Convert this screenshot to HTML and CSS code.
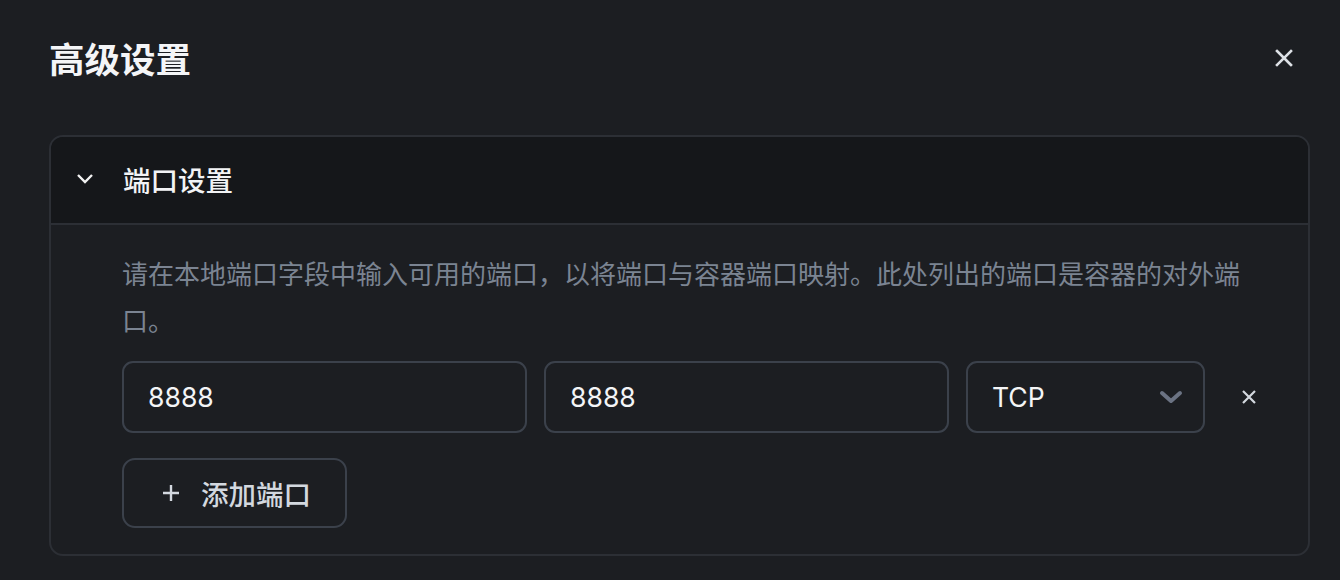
FILE: index.html
```html
<!DOCTYPE html>
<html lang="zh-CN">
<head>
<meta charset="utf-8">
<link rel="stylesheet" href="styles.css">
</head>
<body>
<div class="modal">
  <div class="modal-header">
    <h2 class="modal-title">高级设置</h2>
    <button class="close-btn" aria-label="关闭">
      <svg width="18" height="18" viewBox="0 0 18 18"><path d="M2 2L16 16M16 2L2 16" stroke="#dde1e6" stroke-width="2.6" stroke-linecap="square"/></svg>
    </button>
  </div>
  <div class="accordion">
    <div class="acc-header">
      <svg class="acc-chevron" width="18" height="11" viewBox="0 0 18 11"><path d="M2 2L9 9L16 2" fill="none" stroke="#f2f2f2" stroke-width="2.4"/></svg>
      <span class="acc-title">端口设置</span>
    </div>
    <div class="acc-panel">
      <p class="desc">请在本地端口字段中输入可用的端口，以将端口与容器端口映射。此处列出的端口是容器的对外端口。</p>
      <div class="port-row">
        <div class="field">8888</div>
        <div class="field">8888</div>
        <div class="field select">
          <span>TCP</span>
          <svg width="24" height="14" viewBox="0 0 24 14"><path d="M3 3L12 11L21 3" fill="none" stroke="#6b7383" stroke-width="4" stroke-linejoin="round" stroke-linecap="round"/></svg>
        </div>
        <button class="remove-btn" aria-label="删除">
          <svg width="16" height="16" viewBox="0 0 16 16"><path d="M2 2L14 14M14 2L2 14" stroke="#d3d8df" stroke-width="2.2"/></svg>
        </button>
      </div>
      <button class="add-btn">
        <svg width="18" height="18" viewBox="0 0 18 18"><path d="M9 1V17M1 9H17" stroke="#d3d8df" stroke-width="2.4"/></svg>
        <span>添加端口</span>
      </button>
    </div>
  </div>
</div>
</body>
</html>
```

FILE: styles.css
```css
html, body {
  margin: 0;
  padding: 0;
  background: #1c1e22;
  height: 100%;
}
body {
  font-family: Inter, "Noto Sans CJK SC", sans-serif;
  color: #f2f3f5;
  overflow: hidden;
}
.modal {
  padding: 0 30px 0 49px;
}
.modal-header {
  height: 116px;
  display: flex;
  align-items: center;
  justify-content: space-between;
  margin-bottom: 19px;
}
.modal-title {
  margin: 0;
  font-family: "Noto Sans CJK SC", sans-serif;
  font-size: 35.5px;
  font-weight: 700;
  color: #f4f5f7;
  line-height: 1;
}
.close-btn {
  background: none;
  border: 0;
  padding: 0;
  width: 18px;
  height: 18px;
  margin-right: 17px;
  display: flex;
}
.accordion {
  border: 2px solid #2c2f35;
  border-radius: 14px;
  overflow: hidden;
}
.acc-header {
  box-sizing: border-box;
  height: 88px;
  padding-bottom: 3px;
  background: #15171a;
  border-bottom: 2px solid #2c2f35;
  display: flex;
  align-items: center;
  padding-left: 25px;
}
.acc-chevron {
  margin-right: 29px;
}
.acc-title {
  font-family: "Noto Sans CJK SC", sans-serif;
  font-size: 27.5px;
  font-weight: 500;
  color: #f2f3f5;
}
.acc-panel {
  padding: 24px 32px 26px 71px;
}
.desc {
  margin: 0;
  padding-right: 20px;
  font-family: "Noto Sans CJK SC", sans-serif;
  font-size: 26px;
  line-height: 47px;
  color: #7b8492;
}
.port-row {
  margin-top: 18px;
  display: grid;
  grid-template-columns: 405px 405px 239px 54px;
  column-gap: 17px;
  align-items: center;
}
.field {
  box-sizing: border-box;
  height: 72px;
  border: 2px solid #3b414b;
  border-radius: 11px;
  display: flex;
  align-items: center;
  padding: 0 24px;
  font-family: Inter, sans-serif;
  font-size: 26.6px;
  color: #f4f5f7;
}
.select {
  justify-content: space-between;
  padding-right: 20px;
}
.remove-btn {
  background: none;
  border: 0;
  padding: 0;
  height: 54px;
  display: flex;
  align-items: center;
  justify-content: center;
}
.add-btn {
  margin-top: 25px;
  box-sizing: border-box;
  height: 70px;
  border: 2px solid #3b414b;
  border-radius: 13px;
  background: transparent;
  display: inline-flex;
  align-items: center;
  padding: 0 34px 0 38px;
  gap: 21px;
}
.add-btn span {
  font-family: "Noto Sans CJK SC", sans-serif;
  font-size: 27.5px;
  font-weight: 500;
  color: #d3d8df;
}
```
